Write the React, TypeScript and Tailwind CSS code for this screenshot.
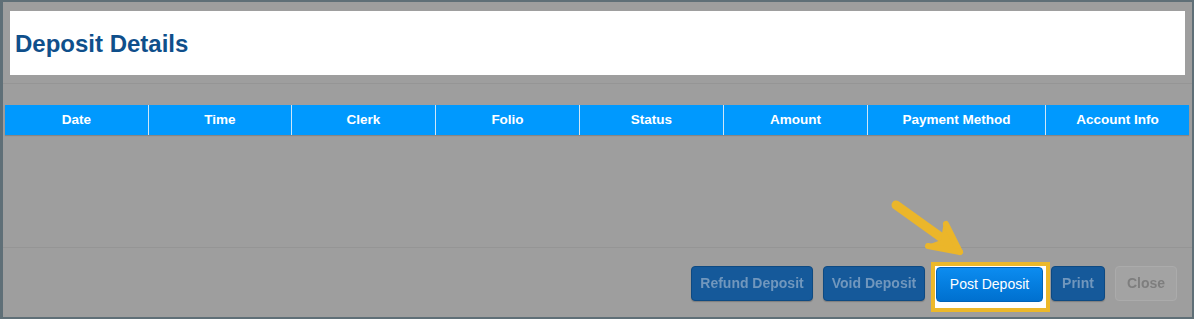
import React from 'react';

const columns = [
  { label: 'Date', w: 'w-[143px]' },
  { label: 'Time', w: 'w-[143px]' },
  { label: 'Clerk', w: 'w-[144px]' },
  { label: 'Folio', w: 'w-[144px]' },
  { label: 'Status', w: 'w-[144px]' },
  { label: 'Amount', w: 'w-[144px]' },
  { label: 'Payment Method', w: 'w-[178px]' },
  { label: 'Account Info', w: 'flex-1' },
];

const font = { fontFamily: '"Liberation Sans", Arial, sans-serif' };

const DimButton: React.FC<{ label: string; w: string; className?: string }> = ({ label, w, className = '' }) => (
  <div
    className={`${w} ${className} h-[35px] rounded-[4px] bg-[#15599a] border border-[#0e4a82] shadow-[0_1px_1px_rgba(0,0,0,0.2)] flex items-center justify-center text-[14px] font-semibold text-[#7197bd] blur-[0.7px]`}
  >
    {label}
  </div>
);

const App: React.FC = () => {
  return (
    <div
      className="relative w-[1194px] h-[319px] bg-[#9e9e9e] border-t-2 border-r-2 border-b-2 border-l-[3px] border-[#5f6f77] flex flex-col"
      style={font}
    >
      {/* title */}
      <div className="px-[7px] pt-[9px] pb-[8px] border-b border-[#959595]">
        <div className="h-[64px] bg-white flex items-center pl-[5px] pt-[2px]">
          <h1 className="text-[24px] font-bold text-[#0f4f8b]">Deposit Details</h1>
        </div>
      </div>

      {/* table header */}
      <div className="ml-[2px] mr-[3px] mt-[21px] h-[30px] bg-[#0099fe] flex shadow-[0_1px_1px_rgba(0,0,0,0.15)]">
        {columns.map((c, i) => (
          <div
            key={c.label}
            className={`${c.w} flex items-center justify-center text-[13.5px] font-bold text-white ${i > 0 ? 'border-l border-[#cde6f7]' : ''}`}
          >
            {c.label}
          </div>
        ))}
      </div>

      <div className="h-[113px] border-b border-[#959595]" />

      {/* footer */}
      <div className="flex-1 flex items-start justify-end pt-[18px] pr-[15px]">
        <DimButton label="Refund Deposit" w="w-[122px]" />
        <DimButton label="Void Deposit" w="w-[102px]" className="ml-[10px]" />
        <div className="ml-[6px] -mt-[4px] border-[4px] border-[#ecb82a] bg-white pt-[1px] pb-[6px] pl-[1px] pr-[3px]">
          <div className="w-[107px] h-[35px] rounded-[4px] bg-gradient-to-b from-[#0c8cf0] to-[#0070cf] border border-[#0063b8] flex items-center justify-center text-[14px] text-white">
            Post Deposit
          </div>
        </div>
        <DimButton label="Print" w="w-[54px]" className="ml-[1px]" />
        <div className="ml-[10px] w-[62px] h-[35px] rounded-[4px] bg-[#a3a3a3] border border-[#ababab] flex items-center justify-center text-[14px] font-semibold text-[#7e7e7e] blur-[0.7px]">
          Close
        </div>
      </div>

      {/* arrow */}
      <svg className="absolute left-[880px] top-[190px]" width="90" height="70" viewBox="0 0 90 70">
        <g stroke="#ebb62a" strokeWidth="9" strokeLinecap="round" fill="none">
          <line x1="13" y1="13" x2="73" y2="56" />
        </g>
        <polygon points="61,29 78,61 42,54 58,48" fill="#ebb62a" />
        <g stroke="#ebb62a" strokeWidth="6" strokeLinecap="round" fill="none">
          <line x1="63" y1="32" x2="77" y2="60" />
          <line x1="45" y1="54" x2="77" y2="60" />
        </g>
      </svg>
    </div>
  );
};

export default App;
